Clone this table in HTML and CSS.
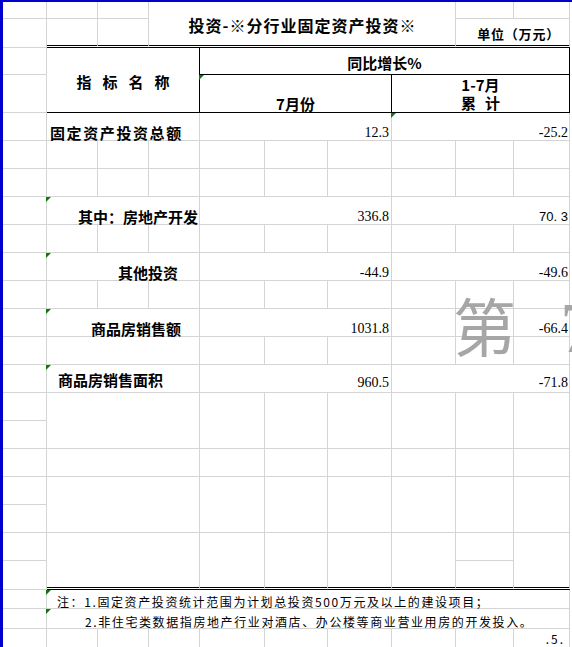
FILE: index.html
```html
<!DOCTYPE html>
<html lang="zh-CN">
<head>
<meta charset="utf-8">
<title>投资-※分行业固定资产投资※</title>
<link rel="stylesheet" href="styles.css">
</head>
<body>
<div class="page">
  <div class="sheet">
    <div class="grid">
      <!-- row 1 -->
      <div></div><div></div><div></div>
      <div class="dh rs2 title">投资-※分行业固定资产投资※</div>
      <div></div><div></div>
      <!-- row 2 -->
      <div></div><div class="dbl"></div><div class="dbl"></div>
      <div class="ij unit">单位（万元）</div>
      <!-- row 3 -->
      <div></div>
      <div class="bd rs2 hname">指标名称</div>
      <div class="ej hyoy">同比增长%</div>
      <!-- row 4 -->
      <div></div>
      <div class="eg hmon tri">7月份</div>
      <div class="hj hcum"><span class="hcum-line">1-7月</span><span class="hcum-line">累 计</span></div>
      <!-- row 5 -->
      <div></div>
      <div class="bd lbl lbl-total">固定资产投资总额</div>
      <div class="eg num">12.3</div>
      <div class="hj num num-r tri">-25.2</div>
      <!-- row 6 -->
      <div></div><div></div><div></div><div></div><div></div><div></div><div></div><div></div><div></div><div></div>
      <!-- row 7 -->
      <div></div><div></div><div></div><div></div><div></div><div></div><div></div><div></div><div></div><div></div>
      <!-- row 8 -->
      <div></div>
      <div class="bd lbl lbl-re tri">其中：房地产开发</div>
      <div class="eg num">336.8</div>
      <div class="hj num num-r num-sans">70. 3</div>
      <!-- row 9 -->
      <div></div><div></div><div></div><div></div><div></div><div></div><div></div><div></div><div></div><div></div>
      <!-- row 10 -->
      <div></div>
      <div class="bd lbl lbl-other tri">其他投资</div>
      <div class="eg num">-44.9</div>
      <div class="hj num num-r">-49.6</div>
      <!-- row 11 -->
      <div></div><div></div><div></div><div></div><div></div><div></div><div></div><div></div><div></div><div></div>
      <!-- row 12 -->
      <div></div>
      <div class="bd lbl lbl-sales tri">商品房销售额</div>
      <div class="eg num">1031.8</div>
      <div></div><div></div>
      <div class="num num-r">-66.4</div>
      <!-- row 13 -->
      <div></div><div class="bd"></div><div></div><div></div><div></div><div></div><div></div><div></div>
      <!-- row 14 -->
      <div></div>
      <div class="bd lbl lbl-area tri">商品房销售面积</div>
      <div class="eg num num-low">960.5</div>
      <div class="hj num num-r num-low">-71.8</div>
      <!-- rows 15-16 -->
      <div></div>
      <div class="bd rs2"></div><div class="rs2"></div><div class="rs2"></div><div class="rs2"></div><div class="rs2"></div><div class="rs2"></div><div class="rs2"></div>
      <div></div>
      <!-- row 17 -->
      <div></div><div class="bd"></div><div></div><div></div><div></div><div></div><div></div><div></div>
      <!-- rows 18-19 -->
      <div></div>
      <div class="bd rs2"></div><div class="rs2"></div><div class="rs2"></div><div class="rs2"></div><div class="rs2"></div><div class="rs2"></div><div class="rs2"></div>
      <div></div>
      <!-- rows 20-21 -->
      <div></div>
      <div class="bd rs2 dbl"></div><div class="rs2 dbl"></div><div class="rs2 dbl"></div><div class="rs2 dbl"></div><div class="rs2 dbl"></div>
      <div></div>
      <div class="rs2 dbl"></div>
      <div></div>
      <div class="dbl"></div>
      <!-- row 22 -->
      <div></div>
      <div class="bj note note1 tri">注：1.固定资产投资统计范围为计划总投资500万元及以上的建设项目；</div>
      <!-- row 23 -->
      <div></div>
      <div class="bj note note2 tri">2.非住宅类数据指房地产行业对酒店、办公楼等商业营业用房的开发投入。</div>
      <!-- row 24 -->
      <div></div><div></div><div></div><div></div><div></div><div></div><div></div><div></div><div></div>
      <div class="pg">.5.</div>
    </div>
  </div>
  <div class="watermark"><span class="wm-ch">第</span><span class="wm-num">7</span></div>
</div>
</body>
</html>
```

FILE: styles.css
```css
* {
  box-sizing: border-box;
}

html,
body {
  margin: 0;
  padding: 0;
  background: #ffffff;
  overflow: hidden;
}

body {
  font-family: "Noto Sans CJK SC", "Noto Sans", sans-serif;
  color: #000000;
}

.page {
  position: relative;
  width: 572px;
  height: 647px;
  overflow: hidden;
}

.sheet {
  border-top: 2px solid #0000cd;
  border-left: 3px solid #0000cd;
  height: 647px;
}

.grid {
  display: grid;
  grid-template-columns: 44px 51px 51px 51px 65px 63px 64px 64px 58px 56px;
  grid-template-rows: 17px 29px 27px 38px repeat(16, 28px) 29px 19px 20px 19px;
}

.grid > div {
  position: relative;
  display: flex;
  min-width: 0;
  white-space: nowrap;
  border-right: 1px solid #d4d4d4;
  border-bottom: 1px solid #d4d4d4;
}

/* spans */
.bd { grid-column: span 3; }
.eg { grid-column: span 3; }
.hj { grid-column: span 3; }
.ej { grid-column: span 6; }
.bj { grid-column: span 9; }
.dh { grid-column: span 5; }
.ij { grid-column: span 2; }
.rs2 { grid-row: span 2; }

.grid > .dbl {
  border-bottom: 3px double #000000;
}

/* header */
.grid > .title {
  font-weight: 700;
  font-size: 16px;
  letter-spacing: 1px;
  justify-content: center;
  align-items: center;
  padding-top: 2px;
  padding-left: 1px;
  border-bottom: 3px double #000000;
}

.grid > .unit {
  font-weight: 700;
  font-size: 13px;
  letter-spacing: 0.8px;
  justify-content: flex-end;
  align-items: center;
  padding-top: 3px;
  padding-right: 9px;
  border-bottom: 3px double #000000;
}

.grid > .hname {
  font-weight: 700;
  font-size: 15px;
  letter-spacing: 11px;
  padding-left: 11px;
  padding-top: 2px;
  justify-content: center;
  align-items: center;
  border-right: 1px solid #000000;
  border-bottom: 1px solid #000000;
}

.grid > .hyoy {
  font-weight: 700;
  font-size: 15px;
  justify-content: center;
  align-items: center;
  padding-top: 2px;
  border-right: 1px solid #000000;
  border-bottom: 1px solid #000000;
}

.grid > .hmon {
  font-weight: 700;
  font-size: 15px;
  line-height: 16px;
  justify-content: center;
  align-items: flex-end;
  border-right: 1px solid #000000;
  border-bottom: 1px solid #000000;
}

.grid > .hcum {
  flex-direction: column;
  align-items: center;
  font-weight: 700;
  font-size: 15px;
  padding-top: 2px;
  word-spacing: 5.5px;
  border-right: 1px solid #000000;
  border-bottom: 1px solid #000000;
}

.hcum-line {
  display: block;
  height: 18px;
  line-height: 16px;
  overflow: visible;
}

/* row labels */
.lbl {
  font-weight: 700;
  font-size: 15px;
  line-height: 14px;
  align-items: flex-end;
}

.lbl-total {
  padding-left: 3px;
  letter-spacing: 1.6px;
}

.lbl-re {
  justify-content: flex-end;
  padding-right: 1px;
}

.lbl-other {
  padding-left: 71px;
}

.lbl-sales {
  padding-left: 44px;
}

.lbl-area {
  padding-left: 11px;
  padding-bottom: 5px;
}

/* numbers */
.num {
  font-family: "Liberation Serif", serif;
  font-size: 14px;
  line-height: 14px;
  justify-content: flex-end;
  align-items: flex-end;
  padding-right: 2px;
}

.num-r {
  padding-right: 1px;
}

.num-low {
  padding-bottom: 2px;
}

.num-sans {
  font-family: "Liberation Sans", sans-serif;
  font-size: 13px;
}

/* notes */
.note {
  font-size: 12px;
  line-height: 12px;
  letter-spacing: 1.6px;
  align-items: flex-end;
}

.note1 {
  padding-left: 10px;
}

.note2 {
  padding-left: 38px;
}

.pg {
  font-size: 12px;
  line-height: 12px;
  letter-spacing: 2px;
  justify-content: flex-end;
  align-items: flex-end;
  padding-right: 4px;
  padding-bottom: 2px;
}

/* green indicator triangles */
.tri::before {
  content: "";
  position: absolute;
  left: -1px;
  top: 0;
  width: 0;
  height: 0;
  border-top: 5px solid #0b7a0b;
  border-right: 5px solid transparent;
}

/* page watermark */
.watermark {
  position: absolute;
  left: 453px;
  top: 292px;
  display: flex;
  align-items: flex-start;
  color: #a6a6a6;
  pointer-events: none;
}

.wm-ch {
  font-family: "Noto Sans CJK SC", sans-serif;
  font-size: 63px;
  line-height: 63px;
}

.wm-num {
  font-family: "Liberation Serif", serif;
  font-size: 72px;
  line-height: 72px;
  margin-left: 44px;
}
```
